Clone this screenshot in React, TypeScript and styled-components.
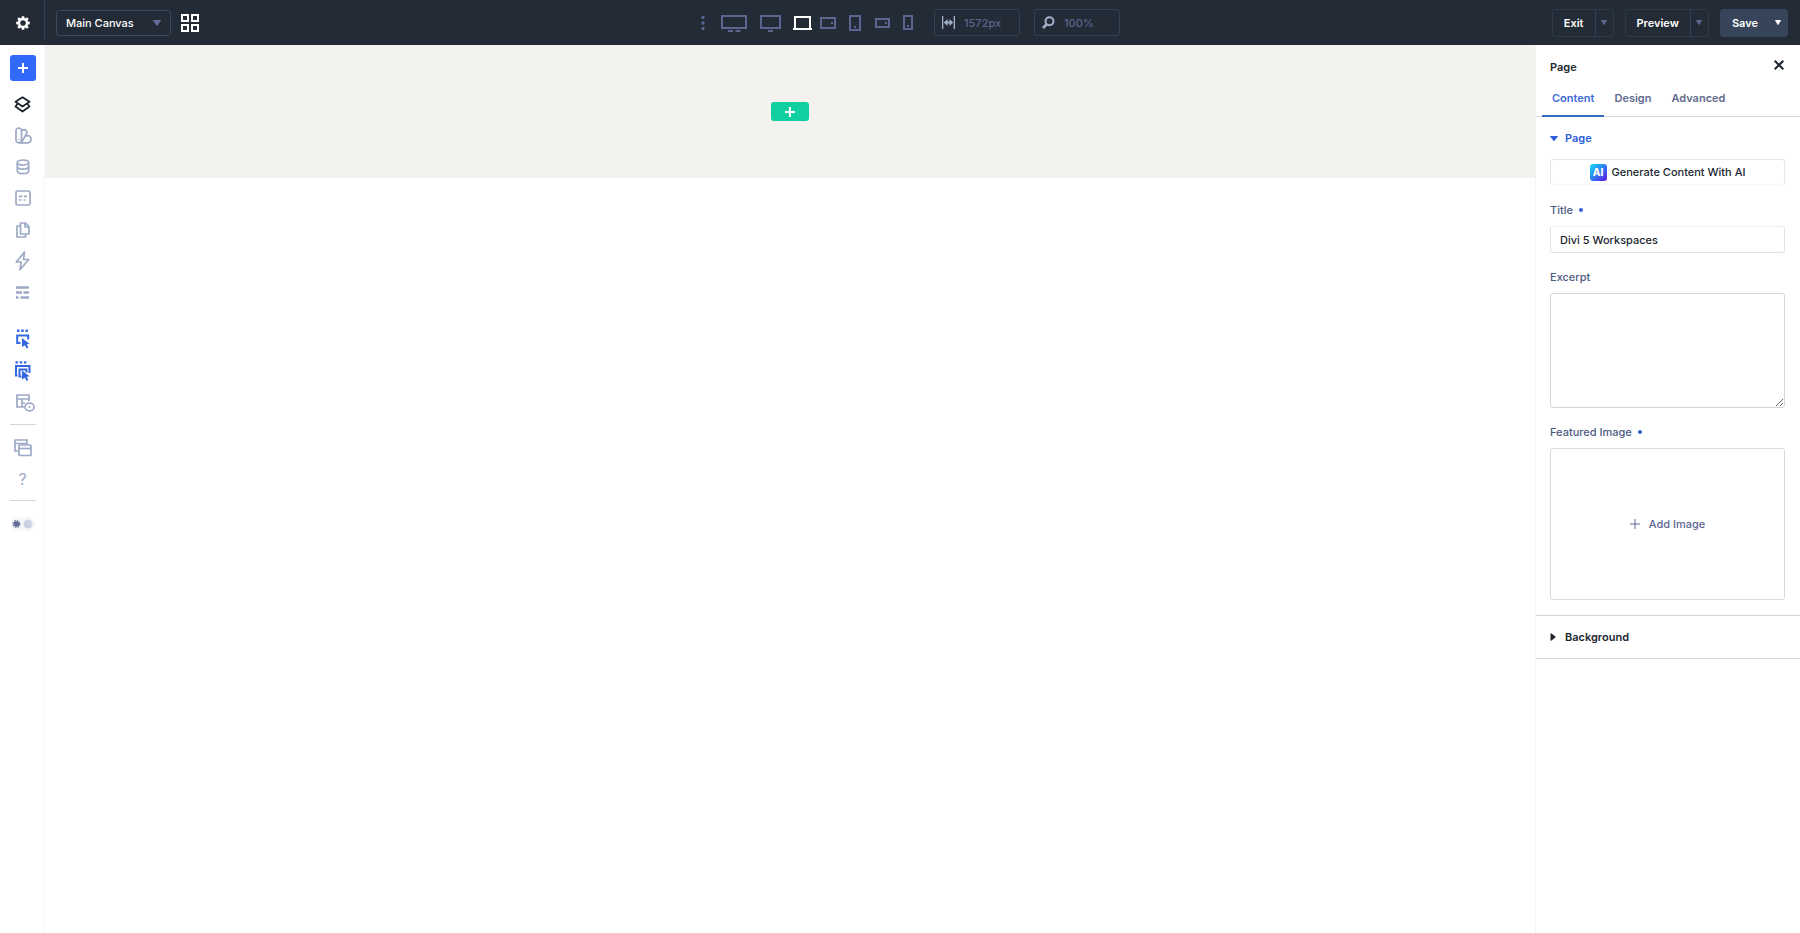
import React from "react";
import styled, { createGlobalStyle } from "styled-components";

const c = {
  bar: "#222b36",
  barLine: "#344152",
  barMuted: "#5a668f",
  barIcon: "#a5b1cc",
  ink: "#20272f",
  text: "#4c5b82",
  blue: "#2b5fd9",
  line: "#d3d9df",
  icon: "#9da9c6",
};

const GlobalStyle = createGlobalStyle`
  *, *::before, *::after { box-sizing: border-box; }
  html, body, #root { height: 100%; }
  body {
    margin: 0;
    background: #fff;
    color: ${c.ink};
    font: 500 11px/16px Inter, "Liberation Sans", sans-serif;
  }
  button, input, select, textarea { font: inherit; color: inherit; margin: 0; }
  button { border: 0; padding: 0; background: none; cursor: pointer; }
  svg { display: block; flex: none; }
`;

const Shell = styled.div`
  display: flex;
  flex-direction: column;
  min-height: 100%;
`;

/* Top bar */

const TopBar = styled.header`
  display: grid;
  grid-template-columns: 1fr auto 1fr;
  align-items: center;
  height: 45px;
  background: ${c.bar};
  color: #fff;
`;

const BarLeft = styled.div`
  display: flex;
  align-items: center;
  height: 45px;
`;

const SettingsButton = styled.button`
  display: grid;
  place-items: center;
  width: 45px;
  height: 40px;
  margin-bottom: 5px;
  padding: 5px 0 0 1px;
  border-right: 1px solid ${c.barLine};
`;

const CanvasPicker = styled.div`
  position: relative;
  margin-left: 11px;
`;

const CanvasSelect = styled.select`
  appearance: none;
  display: block;
  width: 115px;
  height: 26px;
  padding: 0 24px 0 9px;
  border: 1px solid #3b485b;
  border-radius: 3px;
  background: transparent;
  color: #fff;
`;

const PickerArrow = styled.span`
  position: absolute;
  top: 10px;
  right: 10px;
  color: #626a9c;
  pointer-events: none;
`;

const GridButton = styled.button`
  display: grid;
  place-items: center;
  width: 18px;
  height: 24px;
  margin-left: 10px;
`;

const BarCenter = styled.div`
  display: flex;
  align-items: center;
  padding-left: 11px;
`;

const DeviceButton = styled.button<{ $width: number; $active?: boolean }>`
  display: grid;
  place-items: center;
  width: ${(p) => p.$width}px;
  height: 24px;
  color: ${(p) => (p.$active ? "#fff" : c.barMuted)};
`;

const BarField = styled.label`
  display: flex;
  align-items: center;
  gap: 9px;
  width: 86px;
  height: 27px;
  margin-left: 14px;
  padding-left: 7px;
  border: 1px solid ${c.barLine};
  border-radius: 3px;
  color: ${c.barIcon};
`;

const BarInput = styled.input`
  width: 50px;
  padding: 0;
  border: 0;
  outline: 0;
  background: none;
  color: ${c.barMuted};
`;

const BarRight = styled.div`
  display: flex;
  justify-content: flex-end;
  gap: 11px;
  padding-right: 12px;
`;

const SplitButton = styled.div<{ $filled?: boolean }>`
  display: flex;
  height: 28px;
  border: 1px solid ${(p) => (p.$filled ? "#36455a" : "#2f3a49")};
  border-radius: 3px;
  background: ${(p) => (p.$filled ? "#36455a" : "transparent")};
  color: ${(p) => (p.$filled ? "#fff" : c.barMuted)};
`;

const SplitMain = styled.button`
  padding: 0 11px;
  color: #fff;
  font-weight: 600;
`;

const SplitArrow = styled.button<{ $filled?: boolean }>`
  display: grid;
  place-items: center;
  width: 18px;
  border-left: ${(p) => (p.$filled ? "0" : `1px solid ${c.barLine}`)};
`;

/* Body */

const Body = styled.div`
  display: flex;
  flex: 1;
`;

const Sidebar = styled.nav`
  display: flex;
  flex-direction: column;
  align-items: center;
  width: 45px;
  flex: none;
  padding-top: 10px;
  padding-left: 1px;
  border-right: 1px solid #f7f7f9;
`;

const AddButton = styled.button`
  display: grid;
  place-items: center;
  width: 26px;
  height: 26px;
  border-radius: 3px;
  background: #3169fb;
  color: #fff;
`;

const ToolGroup = styled.div<{ $height?: number; $gap?: number }>`
  display: flex;
  flex-direction: column;
  justify-content: space-between;
  height: ${(p) => (p.$height ? `${p.$height}px` : "auto")};
  margin-top: ${(p) => p.$gap ?? 0}px;
`;

const Tool = styled.button<{ $tone?: "dark" | "blue" }>`
  display: grid;
  place-items: center;
  width: 32px;
  height: 31px;
  color: ${(p) => (p.$tone === "dark" ? "#1d232b" : p.$tone === "blue" ? "#3468e0" : c.icon)};
`;

const Rule = styled.hr`
  width: 26px;
  height: 1px;
  margin: 6px 0 7px;
  border: 0;
  background: #ced8de;
`;

const Help = styled(Tool)`
  font-size: 16px;
  font-weight: 400;
  line-height: 20px;
`;

const Canvas = styled.main`
  flex: 1;
  min-width: 0;
`;

const EmptySection = styled.section`
  display: flex;
  justify-content: center;
  align-items: flex-start;
  height: 133px;
  padding-top: 57px;
  background: #f4f2ee;
`;

const InsertButton = styled.button`
  display: grid;
  place-items: center;
  width: 38px;
  height: 19px;
  border-radius: 3px;
  background: #12cfa0;
  color: #fff;
`;

/* Settings panel */

const Panel = styled.aside`
  width: 265px;
  flex: none;
  border-left: 1px solid #f4f4f6;
`;

const PanelHead = styled.div`
  display: flex;
  justify-content: space-between;
  align-items: center;
  height: 36px;
  padding: 8px 15px 0 14px;
`;

const PanelTitle = styled.h2`
  margin: 0;
  font-size: 11px;
  line-height: 16px;
  font-weight: 600;
`;

const CloseButton = styled.button`
  display: grid;
  place-items: center;
  width: 12px;
  height: 20px;
  padding-bottom: 4px;
`;

const Tabs = styled.div`
  display: flex;
  height: 36px;
  padding-left: 6px;
  border-bottom: 1px solid ${c.line};
`;

const Tab = styled.button<{ $active?: boolean }>`
  height: 36px;
  padding: 0 10px;
  border-bottom: 2px solid ${(p) => (p.$active ? "#356cc0" : "transparent")};
  color: ${(p) => (p.$active ? "#3a6bd6" : "#5f6c8c")};
  font-weight: 600;
`;

const GroupToggle = styled.button<{ $open?: boolean }>`
  display: flex;
  align-items: center;
  gap: 7px;
  width: 100%;
  height: 42px;
  padding-left: 14px;
  color: ${(p) => (p.$open ? c.blue : c.ink)};
  font-weight: 600;
`;

const Group = styled.section`
  border-bottom: 1px solid #cbd5dc;
`;

const Fields = styled.div`
  padding: 0 15px 15px 14px;
`;

const AiButton = styled.button`
  display: flex;
  justify-content: center;
  align-items: center;
  gap: 5px;
  width: 100%;
  height: 26px;
  margin-bottom: 16px;
  border: 1px solid #e3e8ec;
  border-bottom-color: #f8f9fa;
  border-radius: 3px;
`;

const Field = styled.div`
  display: flex;
  flex-direction: column;
  margin-bottom: 15px;
  &:last-child { margin-bottom: 0; }
`;

const Label = styled.label<{ $dot?: boolean }>`
  display: flex;
  align-items: center;
  gap: 6px;
  height: 18px;
  margin-bottom: 7px;
  color: ${c.text};
  &::after {
    content: "";
    display: ${(p) => (p.$dot ? "block" : "none")};
    width: 4px;
    height: 4px;
    border-radius: 50%;
    background: #3660d0;
  }
`;

const TextInput = styled.input`
  width: 100%;
  height: 27px;
  padding: 0 9px;
  border: 1px solid #dbe3ea;
  border-top-color: #edf1f4;
  border-radius: 3px;
  outline: 0;
`;

const TextArea = styled.textarea`
  display: block;
  width: 100%;
  height: 115px;
  padding: 6px 9px;
  border: 1px solid #cdd7dc;
  border-radius: 3px;
  outline: 0;
  resize: vertical;
`;

const ImageDrop = styled.button`
  display: flex;
  justify-content: center;
  align-items: center;
  gap: 9px;
  height: 152px;
  border: 1px solid #d5dde3;
  border-radius: 3px;
  color: #5a6690;
`;

/* Icons */

type StrokeProps = { w: number; h: number; sw?: number; children: React.ReactNode };

const Stroke = ({ w, h, sw = 2, children }: StrokeProps) => (
  <svg width={w} height={h} viewBox={`0 0 ${w} ${h}`} fill="none" stroke="currentColor" strokeWidth={sw} aria-hidden="true">
    {children}
  </svg>
);

const Plus = ({ size, sw = 2 }: { size: number; sw?: number }) => (
  <Stroke w={size} h={size} sw={sw}>
    <path d={`M${size / 2} 0V${size}M0 ${size / 2}H${size}`} />
  </Stroke>
);

const Down = ({ w = 7, h = 5 }: { w?: number; h?: number }) => (
  <svg width={w} height={h} viewBox="0 0 8 6" preserveAspectRatio="none" fill="currentColor" aria-hidden="true">
    <path d="M.5 0h7q.8.3.2 1L4.5 5.6q-.5.5-1 0L.3 1Q-.2.3.5 0Z" />
  </svg>
);

const GearIcon = () => (
  <svg width="14" height="14" viewBox="-7 -7 14 14" aria-hidden="true">
    {[0, 45, 90, 135].map((a) => (
      <path key={a} d="M-1.2-6.8h2.4l.5 2.8h-3.4ZM-1.2 6.8h2.4l.5-2.8h-3.4Z" fill="#fff" transform={`rotate(${a})`} />
    ))}
    <circle r="3.9" fill="none" stroke="#fff" strokeWidth="2.1" />
  </svg>
);

const GridIcon = () => (
  <Stroke w={18} h={18}>
    <path d="M1 1h6v6H1ZM11 1h6v6h-6ZM1 11h6v6H1ZM11 11h6v6h-6Z" />
  </Stroke>
);

const devices: { name: string; width: number; active?: boolean; icon: React.ReactNode }[] = [
  {
    name: "More breakpoints",
    width: 24,
    icon: (
      <svg width="4" height="16" viewBox="0 0 4 16" fill="currentColor" aria-hidden="true">
        <circle cx="2" cy="2.5" r="1.7" />
        <circle cx="2" cy="8" r="1.7" />
        <circle cx="2" cy="13.5" r="1.7" />
      </svg>
    ),
  },
  { name: "Ultra wide", width: 38, icon: <Stroke w={26} h={18}><path d="M1 2h24v12H1ZM7 17h5M14.5 17h5" /></Stroke> },
  { name: "Widescreen", width: 35, icon: <Stroke w={21} h={18}><path d="M1 2h19v12H1ZM8 17h5" /></Stroke> },
  { name: "Desktop", width: 28, active: true, icon: <Stroke w={19} h={16}><path d="M2 14V2h15v12M0 14h19" /></Stroke> },
  { name: "Tablet wide", width: 24, icon: <Stroke w={16} h={12}><path d="M1 1h14v10H1ZM11 6h2" /></Stroke> },
  { name: "Tablet", width: 29, icon: <Stroke w={12} h={16}><path d="M1 1h10v14H1ZM6 11v2" /></Stroke> },
  { name: "Phone wide", width: 26, icon: <Stroke w={15} h={10}><path d="M1 1h13v8H1ZM10 5h2" /></Stroke> },
  { name: "Phone", width: 25, icon: <Stroke w={10} h={15}><path d="M1 1h8v13H1ZM5 10v2" /></Stroke> },
];

const WidthIcon = () => (
  <svg width="13" height="13" viewBox="0 0 13 13" fill="currentColor" aria-hidden="true">
    <path d="M0 0h1.3v13H0ZM11.7 0H13v13h-1.3ZM1.8 6.5l3.7-3.6v2.6h2V2.9l3.7 3.6-3.7 3.6V7.5h-2v2.6Z" />
  </svg>
);

const ZoomIcon = () => (
  <Stroke w={13} h={13}>
    <circle cx="7.5" cy="5.3" r="4" />
    <path d="M4.6 8.3 1 12" strokeWidth="2.6" />
  </Stroke>
);

const LayersIcon = () => (
  <Stroke w={17} h={17} sw={1.8}>
    <g strokeLinejoin="round">
      <path d="M8.5 1.2 15.5 5.8 8.5 10.6 1.5 5.8Z" />
      <path d="M3.5 8 1.5 10.5 8.5 15.5l7-5L13.5 8" />
    </g>
  </Stroke>
);

const SwatchIcon = () => (
  <Stroke w={18} h={17} sw={1.7}>
    <g strokeLinejoin="round">
      <rect x="2" y="1" width="5.5" height="14.8" rx="2.7" />
      <path d="M7.5 3.5q3-2 4.8.2 1 1.5.2 3L8 14.5" />
      <path d="M11.5 9q4-1.2 5.2 1.5 1.2 3.6-2 5.3H5" />
      <path d="M4.7 12v.8" />
    </g>
  </Stroke>
);

const DatabaseIcon = () => (
  <Stroke w={14} h={16} sw={1.7}>
    <ellipse cx="7" cy="3.5" rx="5.7" ry="2.5" />
    <path d="M1.3 3.5v8.7q.5 2.5 5.7 2.5t5.7-2.5V3.5M1.3 7.8q.6 2.4 5.7 2.4t5.7-2.4" />
  </Stroke>
);

const VariablesIcon = () => (
  <Stroke w={16} h={16} sw={1.7}>
    <rect x="1" y="1" width="14" height="14" rx="1.5" />
    <path d="M4 6.3h3.5M9 6.3h3M4 10h2.5M8.5 10h2" />
  </Stroke>
);

const PagesIcon = () => (
  <Stroke w={14} h={16} sw={1.7}>
    <g strokeLinejoin="round">
      <path d="M4.5 1h5L13 4.5V12H4.5ZM9 1v4h4" />
      <path d="M4.5 4H1v11h8.5v-3" />
    </g>
  </Stroke>
);

const BoltIcon = () => (
  <Stroke w={15} h={20} sw={1.7}>
    <path strokeLinejoin="round" d="M9.5 1 1.3 11h4.9L5 18.8 13.7 8.5H8.5Z" />
  </Stroke>
);

const LinesIcon = () => (
  <Stroke w={15} h={13} sw={2.6}>
    <path d="M1 1.5h13M1 6.5h6M8.5 6.5H14M1 11.5h2.5M5.5 11.5H14" />
  </Stroke>
);

const CursorPath = ({ x, y }: { x: number; y: number }) => (
  <path transform={`translate(${x} ${y})`} d="M0 0 7.5 5.7 4.8 6.2 6.3 9.5 4.5 10.4 3 7.2 0 9Z" fill="currentColor" stroke="none" />
);

const SelectIcon = () => (
  <Stroke w={16} h={20}>
    <path d="M2 1.8h2.5M6.2 1.8h2.5M10.4 1.8h2.5" strokeWidth="2.4" />
    <path d="M5.5 14H2.2V6.5h11v4" />
    <CursorPath x={7} y={9} />
  </Stroke>
);

const MultiSelectIcon = () => (
  <Stroke w={18} h={20}>
    <path d="M1.5 1.3H4M5.7 1.3h2.5M9.9 1.3h2.5" strokeWidth="2.2" />
    <path d="M3.5 14.5H2V5h13.5v7" />
    <path d="M7.5 15.5h-2v-7h7v3" />
    <CursorPath x={8} y={9.5} />
  </Stroke>
);

const LayoutViewIcon = () => (
  <Stroke w={24} h={18} sw={1.7}>
    <g transform="translate(5 0)">
      <path d="M8 13H1V1h12v6M1 5h12M6 5v8M6 9h3" />
      <ellipse cx="13.5" cy="13" rx="4.6" ry="3.8" />
      <circle cx="13.5" cy="13" r="1" fill="currentColor" stroke="none" />
    </g>
  </Stroke>
);

const WindowsIcon = () => (
  <Stroke w={18} h={18} sw={1.7}>
    <path d="M4 12H1V1h12v4M1 4.5h12" />
    <rect x="5" y="6" width="12" height="10.5" rx="1" />
    <path d="M5 9.5h12" />
  </Stroke>
);

const ThemeIcon = () => (
  <svg width="24" height="14" viewBox="0 0 24 14" aria-hidden="true">
    <rect width="24" height="14" rx="7" fill="#f6f7fa" />
    <circle cx="5.5" cy="7" r="2.8" fill="#626c93" />
    <circle cx="5.5" cy="7" r="3.3" fill="none" stroke="#626c93" strokeWidth="1.4" strokeDasharray="1.4 1.19" />
    <circle cx="17" cy="7" r="4.5" fill="#cfd6e3" />
    <path d="M17 4.5a2.5 2.5 0 1 0 2.3 3.5" fill="none" stroke="#b9c3d5" />
  </svg>
);

const AiLogo = styled.span`
  display: grid;
  place-items: center;
  width: 17px;
  height: 17px;
  border-radius: 3px;
  background: linear-gradient(135deg, #19d4f5 5%, #2f7df6 50%, #5a1fe8 95%);
  color: #fff;
  font-size: 10px;
  line-height: 17px;
  font-weight: 800;
`;

const topTools: { name: string; tone?: "dark" | "blue"; icon: React.ReactNode }[] = [
  { name: "Layers", tone: "dark", icon: <LayersIcon /> },
  { name: "Presets", icon: <SwatchIcon /> },
  { name: "Dynamic data", icon: <DatabaseIcon /> },
  { name: "Variables", icon: <VariablesIcon /> },
  { name: "Pages", icon: <PagesIcon /> },
  { name: "Interactions", icon: <BoltIcon /> },
  { name: "Wireframe", icon: <LinesIcon /> },
];

const selectTools: typeof topTools = [
  { name: "Select", tone: "blue", icon: <SelectIcon /> },
  { name: "Multi-select", tone: "blue", icon: <MultiSelectIcon /> },
  { name: "Layout view", icon: <LayoutViewIcon /> },
];

const actions = [{ name: "Exit" }, { name: "Preview" }, { name: "Save", filled: true }];

export default function App() {
  return (
    <Shell>
      <GlobalStyle />
      <TopBar>
        <BarLeft>
          <SettingsButton aria-label="Settings"><GearIcon /></SettingsButton>
          <CanvasPicker>
            <CanvasSelect aria-label="Canvas"><option>Main Canvas</option></CanvasSelect>
            <PickerArrow><Down w={8} h={6} /></PickerArrow>
          </CanvasPicker>
          <GridButton aria-label="All canvases"><GridIcon /></GridButton>
        </BarLeft>
        <BarCenter>
          {devices.map((d) => (
            <DeviceButton key={d.name} $width={d.width} $active={d.active} aria-label={d.name}>{d.icon}</DeviceButton>
          ))}
          <BarField><WidthIcon /><BarInput aria-label="Canvas width" defaultValue="1572px" /></BarField>
          <BarField><ZoomIcon /><BarInput aria-label="Zoom" defaultValue="100%" /></BarField>
        </BarCenter>
        <BarRight>
          {actions.map((a) => (
            <SplitButton key={a.name} $filled={a.filled}>
              <SplitMain>{a.name}</SplitMain>
              <SplitArrow $filled={a.filled} aria-label={`${a.name} options`}><Down w={6} h={5} /></SplitArrow>
            </SplitButton>
          ))}
        </BarRight>
      </TopBar>
      <Body>
        <Sidebar aria-label="Builder tools">
          <AddButton aria-label="Add"><Plus size={10} /></AddButton>
          <ToolGroup $gap={8} $height={219}>
            {topTools.map((t) => <Tool key={t.name} $tone={t.tone} aria-label={t.name}>{t.icon}</Tool>)}
          </ToolGroup>
          <ToolGroup $gap={15} $height={95}>
            {selectTools.map((t) => <Tool key={t.name} $tone={t.tone} aria-label={t.name}>{t.icon}</Tool>)}
          </ToolGroup>
          <Rule />
          <ToolGroup>
            <Tool aria-label="Canvases"><WindowsIcon /></Tool>
            <Help>?</Help>
          </ToolGroup>
          <Rule />
          <Tool aria-label="Color mode"><ThemeIcon /></Tool>
        </Sidebar>
        <Canvas>
          <EmptySection>
            <InsertButton aria-label="Insert section"><Plus size={10} /></InsertButton>
          </EmptySection>
        </Canvas>
        <Panel>
          <PanelHead>
            <PanelTitle>Page</PanelTitle>
            <CloseButton aria-label="Close">
              <Stroke w={10} h={10}><path d="M.7.7l8.6 8.6M9.3.7.7 9.3" /></Stroke>
            </CloseButton>
          </PanelHead>
          <Tabs role="tablist">
            <Tab role="tab" aria-selected $active>Content</Tab>
            <Tab role="tab">Design</Tab>
            <Tab role="tab">Advanced</Tab>
          </Tabs>
          <Group>
            <GroupToggle $open aria-expanded><Down w={8} h={5} />Page</GroupToggle>
            <Fields>
              <AiButton><AiLogo>AI</AiLogo>Generate Content With AI</AiButton>
              <Field>
                <Label $dot htmlFor="title">Title</Label>
                <TextInput id="title" defaultValue="Divi 5 Workspaces" />
              </Field>
              <Field>
                <Label htmlFor="excerpt">Excerpt</Label>
                <TextArea id="excerpt" />
              </Field>
              <Field>
                <Label $dot htmlFor="image">Featured Image</Label>
                <ImageDrop id="image"><Plus size={10} sw={1} />Add Image</ImageDrop>
              </Field>
            </Fields>
          </Group>
          <Group>
            <GroupToggle aria-expanded={false}>
              <svg width="8" height="8" viewBox="0 0 8 8" fill="currentColor" aria-hidden="true">
                <path d="M.5.5v7q.4.5 1 0L5.4 4.4q.3-.4 0-.8L1.5.5Q.9 0 .5.5Z" />
              </svg>
              Background
            </GroupToggle>
          </Group>
        </Panel>
      </Body>
    </Shell>
  );
}
